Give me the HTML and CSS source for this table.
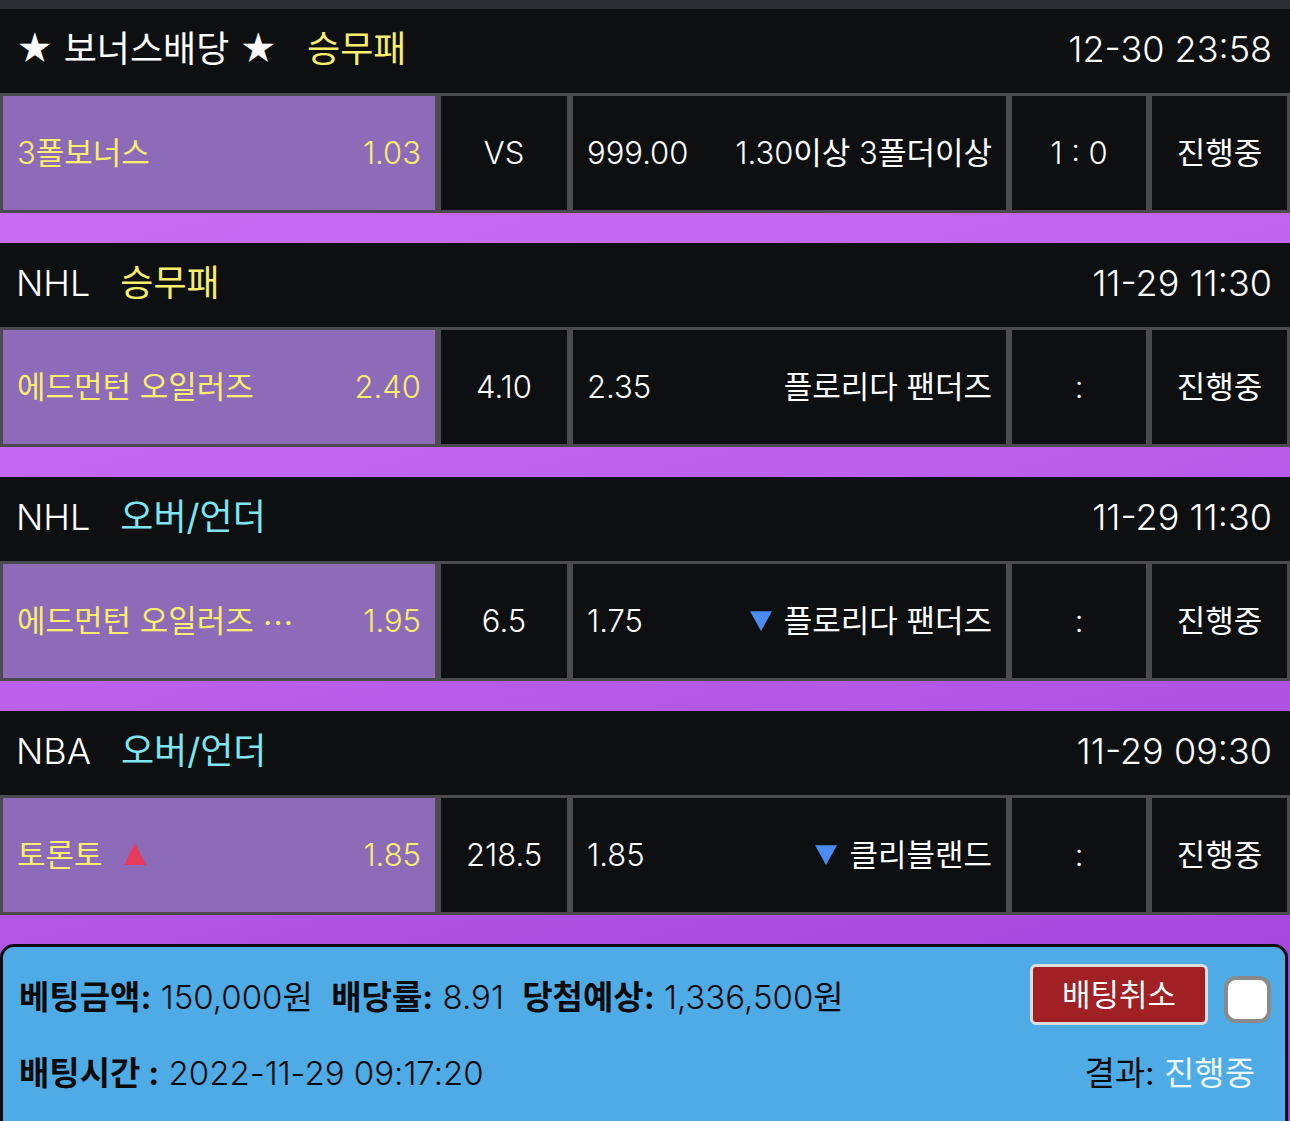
FILE: index.html
```html
<!DOCTYPE html>
<html lang="ko">
<head>
<meta charset="utf-8">
<title>베팅내역</title>
<link rel="stylesheet" href="styles.css">
</head>
<body>
<div class="topbar"></div>
<main class="board">
  <section class="game">
    <div class="game-head">
      <div class="league">★ 보너스배당 ★<span class="type yellow">승무패</span></div>
      <div class="time lat">12-30 23:58</div>
    </div>
    <div class="game-row">
      <div class="cell pick"><span class="team"><span class="lat">3</span>폴보너스</span><span class="odd lat">1.03</span></div>
      <div class="cell center lat">VS</div>
      <div class="cell away"><span class="lat">999.00</span><span class="away-name"><span class="lat">1.30</span>이상&nbsp;<span class="lat">3</span>폴더이상</span></div>
      <div class="cell center lat">1 : 0</div>
      <div class="cell center">진행중</div>
    </div>
  </section>

  <section class="game">
    <div class="game-head">
      <div class="league"><span class="lat">NHL</span><span class="type yellow">승무패</span></div>
      <div class="time lat">11-29 11:30</div>
    </div>
    <div class="game-row">
      <div class="cell pick"><span class="team">에드먼턴 오일러즈</span><span class="odd lat">2.40</span></div>
      <div class="cell center lat">4.10</div>
      <div class="cell away"><span class="lat">2.35</span><span class="away-name">플로리다 팬더즈</span></div>
      <div class="cell center lat">:</div>
      <div class="cell center">진행중</div>
    </div>
  </section>

  <section class="game">
    <div class="game-head">
      <div class="league"><span class="lat">NHL</span><span class="type cyan">오버/언더</span></div>
      <div class="time lat">11-29 11:30</div>
    </div>
    <div class="game-row">
      <div class="cell pick"><span class="team">에드먼턴 오일러즈&nbsp;<span class="ell">…</span></span><span class="odd lat">1.95</span></div>
      <div class="cell center lat">6.5</div>
      <div class="cell away"><span class="lat">1.75</span><span class="away-name"><svg class="tri" viewBox="0 0 20 20"><polygon points="0,2 20,2 10,20" fill="#4a8cf2"/></svg>플로리다 팬더즈</span></div>
      <div class="cell center lat">:</div>
      <div class="cell center">진행중</div>
    </div>
  </section>

  <section class="game">
    <div class="game-head">
      <div class="league"><span class="lat">NBA</span><span class="type cyan">오버/언더</span></div>
      <div class="time lat">11-29 09:30</div>
    </div>
    <div class="game-row">
      <div class="cell pick"><span class="team">토론토<svg class="tri up" viewBox="0 0 20 20"><polygon points="10,0 20,20 0,20" fill="#e73a5c"/></svg></span><span class="odd lat">1.85</span></div>
      <div class="cell center lat">218.5</div>
      <div class="cell away"><span class="lat">1.85</span><span class="away-name"><svg class="tri" viewBox="0 0 20 20"><polygon points="0,2 20,2 10,20" fill="#4a8cf2"/></svg>클리블랜드</span></div>
      <div class="cell center lat">:</div>
      <div class="cell center">진행중</div>
    </div>
  </section>

  <section class="panel">
    <div class="panel-row">
      <div class="info">
        <span class="item"><b>베팅금액:</b> <span class="lat">150,000</span>원</span>
        <span class="item"><b>배당률:</b> <span class="lat">8.91</span></span>
        <span class="item"><b>당첨예상:</b> <span class="lat">1,336,500</span>원</span>
      </div>
      <div class="actions">
        <button class="cancel" type="button">배팅취소</button>
        <span class="check"></span>
      </div>
    </div>
    <div class="panel-row second">
      <div class="info"><b>배팅시간 :</b> <span class="lat">2022-11-29 09:17:20</span></div>
      <div class="result">결과: <span class="result-val">진행중</span></div>
    </div>
  </section>
</main>
</body>
</html>
```

FILE: styles.css
```css
* {
  box-sizing: border-box;
}

html, body {
  margin: 0;
  padding: 0;
}

body {
  font-family: "Inter", "Noto Sans CJK KR", "Noto Sans", sans-serif;
  font-weight: 400;
  color: #ffffff;
  background: linear-gradient(165deg, #cc72f4 0%, #bd62ec 45%, #9d3fd6 100%);
  min-height: 1121px;
  overflow: hidden;
}

.lat {
  font-weight: 300;
}

.ell {
  font-family: "Noto Sans CJK KR", sans-serif;
}

.topbar {
  height: 9px;
  background: #2a2d32;
}

.board {
  display: flex;
  flex-direction: column;
}

.game {
  margin-bottom: 30px;
}

.game-head {
  height: 84px;
  background: #0e0f11;
  display: flex;
  align-items: center;
  justify-content: space-between;
  padding: 0 18px 5px 16px;
  font-size: 36px;
  line-height: 1;
}

.league {
  display: flex;
  align-items: center;
}

.type {
  margin-left: 30px;
}

.yellow {
  color: #f7ee6c;
}

.cyan {
  color: #7de6f2;
}

.game-row {
  display: grid;
  grid-template-columns: 438px 132px 439px 140px 1fr;
  height: 120px;
  font-size: 31px;
  line-height: 1;
}

.cell {
  border: 3px solid #4b4b4f;
  background: #0e0f11;
  display: flex;
  align-items: center;
  padding-bottom: 2px;
}

.pick {
  background: #8e6bb9;
  color: #f7ee6c;
  justify-content: space-between;
  padding: 0 14px 2px 14px;
}

.team {
  display: flex;
  align-items: center;
}

.center {
  justify-content: center;
}

.away {
  justify-content: space-between;
  padding: 0 14px 2px 14px;
}

.away-name {
  display: flex;
  align-items: center;
}

.tri {
  width: 22px;
  height: 22px;
  margin-right: 12px;
}

.tri.up {
  margin: 0 0 0 21px;
}

.panel {
  margin: -1px 2px 0 0;
  height: 200px;
  background: #4fabe6;
  border: 3px solid #0b0b0d;
  border-radius: 14px 14px 0 0;
  color: #0a0a0a;
  padding: 23px 14px 0 16px;
  font-size: 33px;
  line-height: 1;
}

.panel-row {
  display: flex;
  align-items: center;
  justify-content: space-between;
}

.panel-row.second {
  margin-top: 22px;
  height: 52px;
}

.info b {
  font-weight: 700;
}

.item {
  margin-right: 9px;
}

.actions {
  display: flex;
  align-items: center;
  margin-top: -6px;
}

.cancel {
  width: 178px;
  height: 61px;
  background: #a02024;
  border: 3px solid #dcdcdc;
  border-radius: 6px;
  color: #ffffff;
  font-family: "Noto Sans CJK KR", "Noto Sans", sans-serif;
  font-size: 31px;
  font-weight: 400;
  padding: 0 0 4px 0;
}

.check {
  width: 47px;
  height: 47px;
  margin-left: 16px;
  margin-top: 10px;
  background: #ffffff;
  border: 4px solid #8a8a8a;
  border-radius: 12px;
}

.result {
  margin-right: 16px;
}

.result-val {
  color: #eaf6fd;
}
```
